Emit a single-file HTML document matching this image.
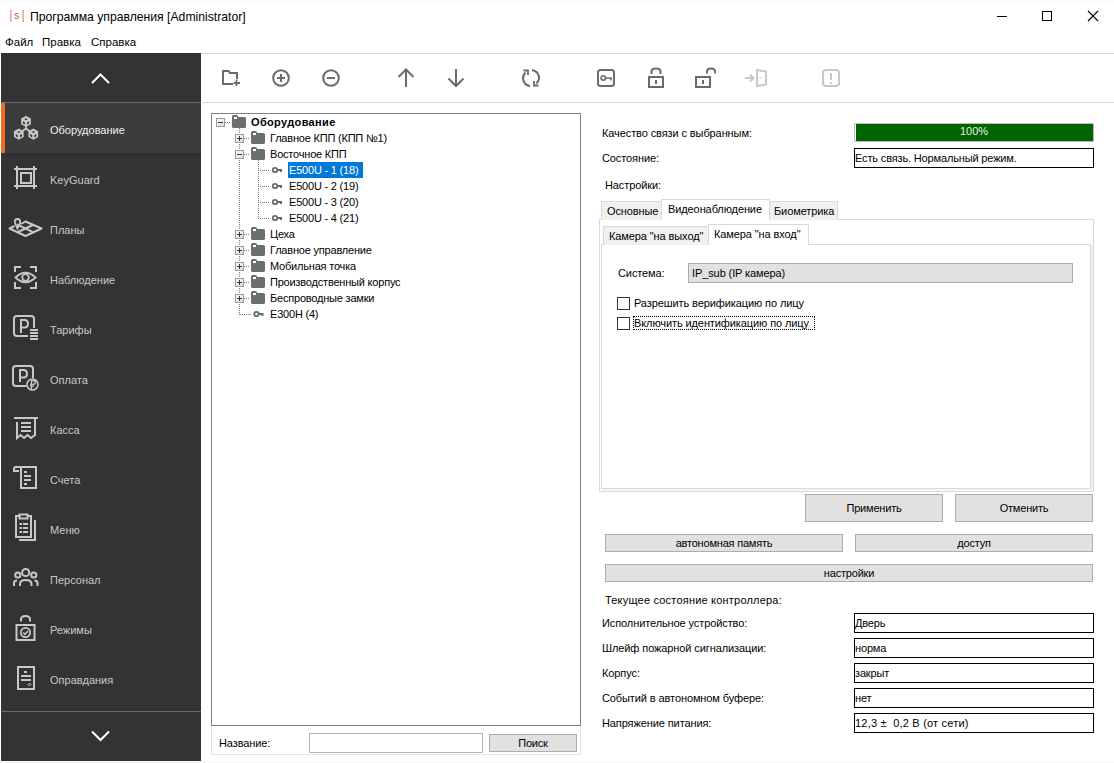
<!DOCTYPE html>
<html><head><meta charset="utf-8">
<style>
*{margin:0;padding:0;box-sizing:border-box}
html,body{width:1114px;height:763px;overflow:hidden;background:#fff;position:relative;font-family:"Liberation Sans",sans-serif;color:#000}
.a{position:absolute}
.t{position:absolute;font-size:11px;line-height:13px;white-space:nowrap;letter-spacing:-0.1px}
.tr{letter-spacing:-0.2px}
.sb{position:absolute;left:1px;top:53px;width:200px;height:708px;background:#333333}
.sl{position:absolute;left:50px;font-size:11px;line-height:13px;color:#c8c8c8;white-space:nowrap}
.box{position:absolute;border:1px solid #000;background:#fff}
.btn{position:absolute;background:#e1e1e1;border:1px solid #adadad;text-align:center;font-size:11px;white-space:nowrap;letter-spacing:-0.2px}
.lbl{position:absolute;left:602px;font-size:11px;line-height:13px;white-space:nowrap;letter-spacing:-0.1px}
.val{position:absolute;left:854px;width:240px;height:20px;border:1px solid #000;font-size:11px;line-height:19px;padding-left:0;white-space:nowrap;letter-spacing:-0.15px}
</style></head><body>

<!-- title bar -->
<div class="a" style="left:0;top:0;width:1114px;height:3px;background:#f9f9f9"></div>
<div class="t" style="left:30px;top:10px;font-size:12.2px;line-height:15px;letter-spacing:0;color:#000">Программа управления [Administrator]</div>
<div class="t" style="left:5px;top:35px;font-size:11.5px;line-height:14px;letter-spacing:0">Файл</div>
<div class="t" style="left:42px;top:35px;font-size:11.5px;line-height:14px;letter-spacing:0">Правка</div>
<div class="t" style="left:91px;top:35px;font-size:11.5px;line-height:14px;letter-spacing:0">Справка</div>

<!-- toolbar lines -->
<div class="a" style="left:201px;top:53px;width:913px;height:1px;background:#d9d9d9"></div>
<div class="a" style="left:201px;top:102px;width:913px;height:1px;background:#d9d9d9"></div>

<!-- sidebar -->
<div class="sb"></div>
<div class="a" style="left:1px;top:102px;width:200px;height:1px;background:#6a6a6a"></div>
<div class="a" style="left:1px;top:103px;width:200px;height:50px;background:#3c3c3c"></div>
<div class="a" style="left:1px;top:103px;width:4px;height:50px;background:#f26b1d"></div>
<div class="a" style="left:1px;top:711px;width:200px;height:1px;background:#6a6a6a"></div>
<div class="a" style="left:5px;top:153px;width:196px;height:3px;background:#2f2f2f"></div>
<div class="sl" style="top:124px;color:#f0f0f0">Оборудование</div>
<div class="sl" style="top:174px">KeyGuard</div>
<div class="sl" style="top:224px">Планы</div>
<div class="sl" style="top:274px">Наблюдение</div>
<div class="sl" style="top:324px">Тарифы</div>
<div class="sl" style="top:374px">Оплата</div>
<div class="sl" style="top:424px">Касса</div>
<div class="sl" style="top:474px">Счета</div>
<div class="sl" style="top:524px">Меню</div>
<div class="sl" style="top:574px">Персонал</div>
<div class="sl" style="top:624px">Режимы</div>
<div class="sl" style="top:674px">Оправдания</div>

<!-- tree box -->
<div class="a" style="left:211px;top:113px;width:370px;height:613px;border:1px solid #828282;background:#fff"></div>
<div class="a" style="left:211px;top:726px;width:370px;height:29px;border:1px solid #e3e3e3;border-top:none"></div>
<div class="t" style="left:219px;top:737px">Название:</div>
<div class="a" style="left:309px;top:733px;width:174px;height:20px;border:1px solid #b4b4b4;background:#fff"></div>
<div class="btn" style="left:489px;top:734px;width:88px;height:18px;line-height:16px">Поиск</div>

<!-- tree rows -->
<div class="t" style="left:251px;top:116px;font-weight:bold;letter-spacing:0.35px">Оборудование</div>
<div class="t tr" style="left:270px;top:132px">Главное КПП (КПП №1)</div>
<div class="t tr" style="left:270px;top:148px">Восточное КПП</div>
<div class="a" style="left:288px;top:162px;width:75px;height:16px;background:#0078d7"></div>
<div class="t tr" style="left:289px;top:164px;color:#fff">E500U - 1 (18)</div>
<div class="t tr" style="left:289px;top:180px">E500U - 2 (19)</div>
<div class="t tr" style="left:289px;top:196px">E500U - 3 (20)</div>
<div class="t tr" style="left:289px;top:212px">E500U - 4 (21)</div>
<div class="t tr" style="left:270px;top:228px">Цеха</div>
<div class="t tr" style="left:270px;top:244px">Главное управление</div>
<div class="t tr" style="left:270px;top:260px">Мобильная точка</div>
<div class="t tr" style="left:270px;top:276px">Производственный корпус</div>
<div class="t tr" style="left:270px;top:292px">Беспроводные замки</div>
<div class="t tr" style="left:270px;top:308px">E300H (4)</div>

<!-- right panel -->
<div class="lbl" style="top:127px">Качество связи с выбранным:</div>
<div class="a" style="left:854px;top:123px;width:240px;height:19px;border:1px solid #bcbcbc;background:#fff"></div>
<div class="a" style="left:856px;top:124px;width:237px;height:17px;background:#006400"></div>
<div class="t" style="left:854px;top:125px;width:240px;text-align:center;color:#e6f0e6;letter-spacing:0">100%</div>
<div class="lbl" style="top:152px">Состояние:</div>
<div class="val" style="top:148px">Есть связь. Нормальный режим.</div>
<div class="lbl" style="left:605px;top:179px">Настройки:</div>

<!-- tabs -->
<div class="a" style="left:599px;top:219px;width:495px;height:273px;border:1px solid #d9d9d9;background:#fff"></div>
<div class="a" style="left:601px;top:201px;width:61px;height:19px;border:1px solid #d9d9d9;border-bottom:none;background:#f0f0f0"></div>
<div class="a" style="left:769px;top:201px;width:69px;height:19px;border:1px solid #d9d9d9;border-bottom:none;background:#f0f0f0"></div>
<div class="a" style="left:661px;top:199px;width:109px;height:21px;border:1px solid #d9d9d9;border-bottom:none;background:#fff"></div>
<div class="t" style="left:607px;top:205px">Основные</div>
<div class="t" style="left:668px;top:203px">Видеонаблюдение</div>
<div class="t" style="left:774px;top:205px">Биометрика</div>

<div class="a" style="left:1091px;top:245px;width:2px;height:246px;background:#f0f0f0"></div>
<div class="a" style="left:600px;top:489px;width:493px;height:2px;background:#f7f7f7"></div>
<div class="a" style="left:601px;top:244px;width:490px;height:245px;border:1px solid #d9d9d9;background:#fff"></div>
<div class="a" style="left:603px;top:226px;width:106px;height:19px;border:1px solid #d9d9d9;border-bottom:none;background:#f0f0f0"></div>
<div class="a" style="left:708px;top:224px;width:101px;height:21px;border:1px solid #d9d9d9;border-bottom:none;background:#fff"></div>
<div class="t" style="left:609px;top:230px">Камера "на выход"</div>
<div class="t" style="left:714px;top:228px">Камера "на вход"</div>

<div class="t" style="left:618px;top:267px">Система:</div>
<div class="a" style="left:688px;top:263px;width:385px;height:20px;border:1px solid #adadad;background:#e1e1e1"></div>
<div class="t" style="left:692px;top:267px">IP_sub (IP камера)</div>
<div class="a" style="left:617px;top:297px;width:13px;height:13px;border:1px solid #333;background:#fff"></div>
<div class="t" style="left:634px;top:297px">Разрешить верификацию по лицу</div>
<div class="a" style="left:617px;top:317px;width:13px;height:13px;border:1px solid #333;background:#fff"></div>
<div class="a" style="left:633px;top:316px;width:182px;height:14px;border:1px dotted #000"></div>
<div class="t" style="left:634px;top:317px">Включить идентификацию по лицу</div>

<!-- buttons -->
<div class="btn" style="left:805px;top:494px;width:138px;height:28px;line-height:26px">Применить</div>
<div class="btn" style="left:955px;top:494px;width:138px;height:28px;line-height:26px">Отменить</div>
<div class="btn" style="left:605px;top:534px;width:238px;height:18px;line-height:16px">автономная память</div>
<div class="btn" style="left:855px;top:534px;width:238px;height:18px;line-height:16px">доступ</div>
<div class="btn" style="left:605px;top:564px;width:488px;height:18px;line-height:16px">настройки</div>

<div class="lbl" style="left:605px;top:594px;letter-spacing:0.2px">Текущее состояние контроллера:</div>
<div class="lbl" style="top:617px">Исполнительное устройство:</div>
<div class="val" style="top:613px">Дверь</div>
<div class="lbl" style="top:642px">Шлейф пожарной сигнализации:</div>
<div class="val" style="top:638px">норма</div>
<div class="lbl" style="top:667px">Корпус:</div>
<div class="val" style="top:663px">закрыт</div>
<div class="lbl" style="top:692px">Событий в автономном буфере:</div>
<div class="val" style="top:688px">нет</div>
<div class="lbl" style="top:717px">Напряжение питания:</div>
<div class="val" style="top:713px;letter-spacing:0.2px">12,3 ±&nbsp; 0,2 В (от сети)</div>

<div class="a" style="left:0;top:761px;width:1114px;height:2px;background:#f8f8f8"></div>

<!-- ICONS overlay -->
<svg class="a" style="left:0;top:0" width="1114" height="763" viewBox="0 0 1114 763">
<defs>
<linearGradient id="eg" x1="0" y1="0" x2="1" y2="1"><stop offset="0" stop-color="#ffffff"/><stop offset="1" stop-color="#d8d8e4"/></linearGradient>
</defs>
<!-- window controls -->
<g stroke="#000" stroke-width="1" fill="none">
<line x1="997" y1="16.5" x2="1007" y2="16.5"/>
<rect x="1042.5" y="11.5" width="9" height="9"/>
<path d="M1088 11L1098 21M1098 11L1088 21" stroke-width="1.1"/>
</g>
<!-- logo -->
<rect x="10" y="10" width="1.6" height="12" fill="#e4ab9c"/>
<rect x="22.3" y="10" width="1.6" height="12" fill="#e4ab9c"/>
<text x="14" y="19.2" font-family="Liberation Sans" font-size="10.5" fill="#a06a5e">s</text>
<!-- sidebar chevrons -->
<path d="M92 83L100.5 74.5L109 83" stroke="#fff" stroke-width="2" fill="none"/>
<path d="M92 731.5L100.5 740L109 731.5" stroke="#fff" stroke-width="2" fill="none"/>
<g fill="none" stroke="#c8c8c8" stroke-width="2">
<!-- KeyGuard -->
<path d="M14 169H37M14 186H37M17 166V189M34 166V189"/>
<rect x="21" y="173" width="10" height="10"/>
<!-- Planы -->
<path d="M21 224L25.5 221.5L41.5 228.5L25.5 236L9.5 228.5L14.5 226" stroke-linejoin="round"/>
<path d="M17 232.5L34 224.5M17 224.3L34 232.7" />
<path d="M17.5 228.5L15 223Q14.3 219 17.5 219Q20.7 219 20 223Z" stroke-width="1.8"/>
<!-- Наблюдение -->
<path d="M15 272V267H21M30 267H36V272M15 282V288H21M30 288H36V282"/>
<path d="M15.5 277.5Q25.5 268 35.5 277.5Q25.5 287 15.5 277.5Z" stroke-width="1.8"/>
<circle cx="25.5" cy="277.5" r="3.3" stroke-width="1.8"/>
<!-- Тарифы -->
<path d="M34 328V319Q34 316 31 316H17Q14 316 14 319V333Q14 336 17 336H28"/>
<path d="M21 333V320H24.5Q28 320 28 323.8Q28 327.5 24.5 327.5H21"/>
<path d="M30 330H38M30 333H38M30 336H38M30 339H38" stroke-width="1.8"/>
<!-- Оплата -->
<path d="M33 378V369Q33 366 30 366H16Q13 366 13 369V383Q13 386 16 386H26.5"/>
<path d="M20 382V370H23.5Q27 370 27 373.8Q27 377.5 23.5 377.5H20"/>
<circle cx="32.5" cy="384.5" r="5.5" stroke-width="1.6" fill="#333"/>
<path d="M31.5 389V380.5H33.3Q35.3 380.5 35.3 382.5Q35.3 384.3 33.3 384.3H30M30 386.2H34" stroke-width="1.3"/>
<!-- Касса -->
<path d="M14 418H38M17 422V438L20.5 435L24 438L27.5 435L31 438L35 435V418"/>
<path d="M21 423H31M21 427H31M21 431H31"/>
<!-- Счета -->
<path d="M21 489V467H36V488H21M21 467H16Q14 467 14 469V471H19" />
<path d="M24 472H27M24 476H31M24 480H31M24 484H27"/>
<!-- Меню -->
<path d="M19 516H16V537H31V516H28"/>
<rect x="19.5" y="514.5" width="8" height="4"/>
<path d="M35 520V540H19"/>
<path d="M19.5 524H22M23 524H28M19.5 528H22M23 528H28M19.5 532H22M23 532H28"/>
<!-- Персонал -->
<circle cx="25.7" cy="572.5" r="3.6"/>
<circle cx="17.8" cy="575" r="2.6"/>
<circle cx="33.8" cy="575" r="2.6"/>
<path d="M20 586V584Q20 580 25.7 580Q31.5 580 31.5 584V586"/>
<path d="M14 586V583Q14 580.5 17 580.5M37.5 586V583Q37.5 580.5 34.5 580.5"/>
<!-- Режимы -->
<path d="M21 621.5V619.5Q21 616 25.5 616Q30 616 30 619.5V621.5"/>
<rect x="16.5" y="625" width="18" height="15"/>
<circle cx="25.5" cy="632.5" r="4.6" stroke-width="1.8"/>
<path d="M23.2 632.5L25 634.3L28 631" stroke-width="1.5"/>
<!-- Оправдания -->
<rect x="18" y="667" width="16" height="22"/>
<path d="M24 672H27M21 676H31M21 680H31"/>
<path d="M29.5 683L31 684.5L29.5 686L28 684.5Z" stroke-width="1"/>
</g>
<!-- Оборудование cubes -->
<path d="M26 115.80000000000001L30.85 118.60V124.20L26 127.0L21.15 124.20V118.60Z" fill="#c8c8c8"/><path d="M24.30 119.30L26 118.30L27.70 119.30L26 120.30ZM22.90 121.20L24.90 122.30V124.70L22.90 123.60ZM29.10 121.20L27.10 122.30V124.70L29.10 123.60Z" fill="#3c3c3c"/><path d="M18.8 128.5L23.65 131.30V136.90L18.8 139.7L13.95 136.90V131.30Z" fill="#c8c8c8"/><path d="M17.10 132.00L18.8 131.00L20.50 132.00L18.8 133.00ZM15.70 133.90L17.70 135.00V137.40L15.70 136.30ZM21.90 133.90L19.90 135.00V137.40L21.90 136.30Z" fill="#3c3c3c"/><path d="M33.3 128.5L38.15 131.30V136.90L33.3 139.7L28.45 136.90V131.30Z" fill="#c8c8c8"/><path d="M31.60 132.00L33.3 131.00L35.00 132.00L33.3 133.00ZM30.20 133.90L32.20 135.00V137.40L30.20 136.30ZM36.40 133.90L34.40 135.00V137.40L36.40 136.30Z" fill="#3c3c3c"/>
<path d="M26 126V129M26 128.5L22.5 131M26 128.5L29.5 131" stroke="#c8c8c8" stroke-width="1.6" fill="none"/>
<!-- toolbar icons -->
<g fill="none" stroke="#6b6b6b" stroke-width="2">
<path d="M233 84H223V71H228.5L230 73H237V79"/>
<path d="M236.5 79.5V86M233.5 83H240" stroke-width="1.8"/>
<circle cx="281" cy="78" r="7.8"/>
<path d="M281 74V82M277 78H285"/>
<circle cx="331" cy="78" r="7.8"/>
<path d="M327 78H335"/>
<path d="M406 70V87M398.5 77L406 69.5L413.5 77"/>
<path d="M456 69V86M448.5 78.5L456 86L463.5 78.5"/>
<path d="M525.5 72.5Q522.5 76 523 79Q524 85 530 86M536.5 83.5Q539.5 80 539 77Q538 71 532 70"/>
<path d="M523.5 70.5H528V75M538.5 85.5H534V81" stroke-width="1.8"/>
<rect x="598" y="70" width="16" height="16" rx="2.5"/>
<circle cx="603.3" cy="78" r="2.2" stroke-width="1.6"/>
<path d="M605.5 78H611V80.5" stroke-width="1.6"/>
<path d="M651.5 74V71.5Q651.5 68.5 656 68.5Q660.5 68.5 660.5 71.5V74"/>
<rect x="649" y="77" width="14" height="10"/>
<path d="M656 80V84"/>
<path d="M707 73.5V71.5Q707 68.5 711 68.5Q715 68.5 715 71.5V73.5"/>
<rect x="696" y="77" width="14" height="10"/>
<path d="M703 80V84"/>
</g>
<g fill="none" stroke="#c8c8c8" stroke-width="2">
<path d="M745 78H753M750 74.5L753.5 78L750 81.5" stroke-width="1.8"/>
<path d="M757 70L766 71.5V84.5L757 86Z"/>
<rect x="759.5" y="77" width="1.5" height="1.5" fill="#c8c8c8" stroke="none"/>
<rect x="823" y="70" width="16" height="16" rx="3"/>
<path d="M831 73V80M831 82V84"/>
</g>
<line x1="225" y1="122.5" x2="230" y2="122.5" stroke="#7a7a7a" stroke-dasharray="1 1"/>
<line x1="239.5" y1="128" x2="239.5" y2="315" stroke="#7a7a7a" stroke-dasharray="1 1"/>
<line x1="258.5" y1="160" x2="258.5" y2="219" stroke="#7a7a7a" stroke-dasharray="1 1"/>
<line x1="260" y1="170.5" x2="269" y2="170.5" stroke="#7a7a7a" stroke-dasharray="1 1"/>
<line x1="260" y1="186.5" x2="269" y2="186.5" stroke="#7a7a7a" stroke-dasharray="1 1"/>
<line x1="260" y1="202.5" x2="269" y2="202.5" stroke="#7a7a7a" stroke-dasharray="1 1"/>
<line x1="260" y1="218.5" x2="269" y2="218.5" stroke="#7a7a7a" stroke-dasharray="1 1"/>
<line x1="244" y1="138.5" x2="250" y2="138.5" stroke="#7a7a7a" stroke-dasharray="1 1"/>
<line x1="244" y1="154.5" x2="250" y2="154.5" stroke="#7a7a7a" stroke-dasharray="1 1"/>
<line x1="244" y1="234.5" x2="250" y2="234.5" stroke="#7a7a7a" stroke-dasharray="1 1"/>
<line x1="244" y1="250.5" x2="250" y2="250.5" stroke="#7a7a7a" stroke-dasharray="1 1"/>
<line x1="244" y1="266.5" x2="250" y2="266.5" stroke="#7a7a7a" stroke-dasharray="1 1"/>
<line x1="244" y1="282.5" x2="250" y2="282.5" stroke="#7a7a7a" stroke-dasharray="1 1"/>
<line x1="244" y1="298.5" x2="250" y2="298.5" stroke="#7a7a7a" stroke-dasharray="1 1"/>
<line x1="240" y1="314.5" x2="251" y2="314.5" stroke="#7a7a7a" stroke-dasharray="1 1"/>
<rect x="216.5" y="118.5" width="8" height="8" fill="url(#eg)" stroke="#9a9a9a"/>
<rect x="218" y="122" width="5" height="1" fill="#2e3566"/>
<path d="M232 116.5Q232 115 233.5 115H237L238.5 117H244.5Q246 117 246 118.5V126.5Q246 128 244.5 128H233.5Q232 128 232 126.5Z" fill="#6e6e6e"/>
<rect x="234" y="117" width="3" height="2" fill="#fff"/>
<rect x="235.5" y="134.5" width="8" height="8" fill="url(#eg)" stroke="#9a9a9a"/>
<rect x="237" y="138" width="5" height="1" fill="#2e3566"/>
<rect x="239" y="136" width="1" height="5" fill="#2e3566"/>
<path d="M251 132.5Q251 131 252.5 131H256L257.5 133H263.5Q265 133 265 134.5V142.5Q265 144 263.5 144H252.5Q251 144 251 142.5Z" fill="#6e6e6e"/>
<rect x="253" y="133" width="3" height="2" fill="#fff"/>
<rect x="235.5" y="230.5" width="8" height="8" fill="url(#eg)" stroke="#9a9a9a"/>
<rect x="237" y="234" width="5" height="1" fill="#2e3566"/>
<rect x="239" y="232" width="1" height="5" fill="#2e3566"/>
<path d="M251 228.5Q251 227 252.5 227H256L257.5 229H263.5Q265 229 265 230.5V238.5Q265 240 263.5 240H252.5Q251 240 251 238.5Z" fill="#6e6e6e"/>
<rect x="253" y="229" width="3" height="2" fill="#fff"/>
<rect x="235.5" y="246.5" width="8" height="8" fill="url(#eg)" stroke="#9a9a9a"/>
<rect x="237" y="250" width="5" height="1" fill="#2e3566"/>
<rect x="239" y="248" width="1" height="5" fill="#2e3566"/>
<path d="M251 244.5Q251 243 252.5 243H256L257.5 245H263.5Q265 245 265 246.5V254.5Q265 256 263.5 256H252.5Q251 256 251 254.5Z" fill="#6e6e6e"/>
<rect x="253" y="245" width="3" height="2" fill="#fff"/>
<rect x="235.5" y="262.5" width="8" height="8" fill="url(#eg)" stroke="#9a9a9a"/>
<rect x="237" y="266" width="5" height="1" fill="#2e3566"/>
<rect x="239" y="264" width="1" height="5" fill="#2e3566"/>
<path d="M251 260.5Q251 259 252.5 259H256L257.5 261H263.5Q265 261 265 262.5V270.5Q265 272 263.5 272H252.5Q251 272 251 270.5Z" fill="#6e6e6e"/>
<rect x="253" y="261" width="3" height="2" fill="#fff"/>
<rect x="235.5" y="278.5" width="8" height="8" fill="url(#eg)" stroke="#9a9a9a"/>
<rect x="237" y="282" width="5" height="1" fill="#2e3566"/>
<rect x="239" y="280" width="1" height="5" fill="#2e3566"/>
<path d="M251 276.5Q251 275 252.5 275H256L257.5 277H263.5Q265 277 265 278.5V286.5Q265 288 263.5 288H252.5Q251 288 251 286.5Z" fill="#6e6e6e"/>
<rect x="253" y="277" width="3" height="2" fill="#fff"/>
<rect x="235.5" y="294.5" width="8" height="8" fill="url(#eg)" stroke="#9a9a9a"/>
<rect x="237" y="298" width="5" height="1" fill="#2e3566"/>
<rect x="239" y="296" width="1" height="5" fill="#2e3566"/>
<path d="M251 292.5Q251 291 252.5 291H256L257.5 293H263.5Q265 293 265 294.5V302.5Q265 304 263.5 304H252.5Q251 304 251 302.5Z" fill="#6e6e6e"/>
<rect x="253" y="293" width="3" height="2" fill="#fff"/>
<rect x="235.5" y="150.5" width="8" height="8" fill="url(#eg)" stroke="#9a9a9a"/>
<rect x="237" y="154" width="5" height="1" fill="#2e3566"/>
<path d="M251 148.5Q251 147 252.5 147H256L257.5 149H263.5Q265 149 265 150.5V158.5Q265 160 263.5 160H252.5Q251 160 251 158.5Z" fill="#6e6e6e"/>
<rect x="253" y="149" width="3" height="2" fill="#fff"/>
<circle cx="275" cy="170" r="2.2" fill="none" stroke="#6a6a6a" stroke-width="1.8"/>
<path d="M277 169h5v3h-2v-1h-3z" fill="#6a6a6a"/>
<circle cx="275" cy="186" r="2.2" fill="none" stroke="#6a6a6a" stroke-width="1.8"/>
<path d="M277 185h5v3h-2v-1h-3z" fill="#6a6a6a"/>
<circle cx="275" cy="202" r="2.2" fill="none" stroke="#6a6a6a" stroke-width="1.8"/>
<path d="M277 201h5v3h-2v-1h-3z" fill="#6a6a6a"/>
<circle cx="275" cy="218" r="2.2" fill="none" stroke="#6a6a6a" stroke-width="1.8"/>
<path d="M277 217h5v3h-2v-1h-3z" fill="#6a6a6a"/>
<circle cx="256.5" cy="314" r="2.2" fill="none" stroke="#6a6a6a" stroke-width="1.8"/>
<path d="M258.5 313h5v3h-2v-1h-3z" fill="#6a6a6a"/>
</svg>
</body></html>
